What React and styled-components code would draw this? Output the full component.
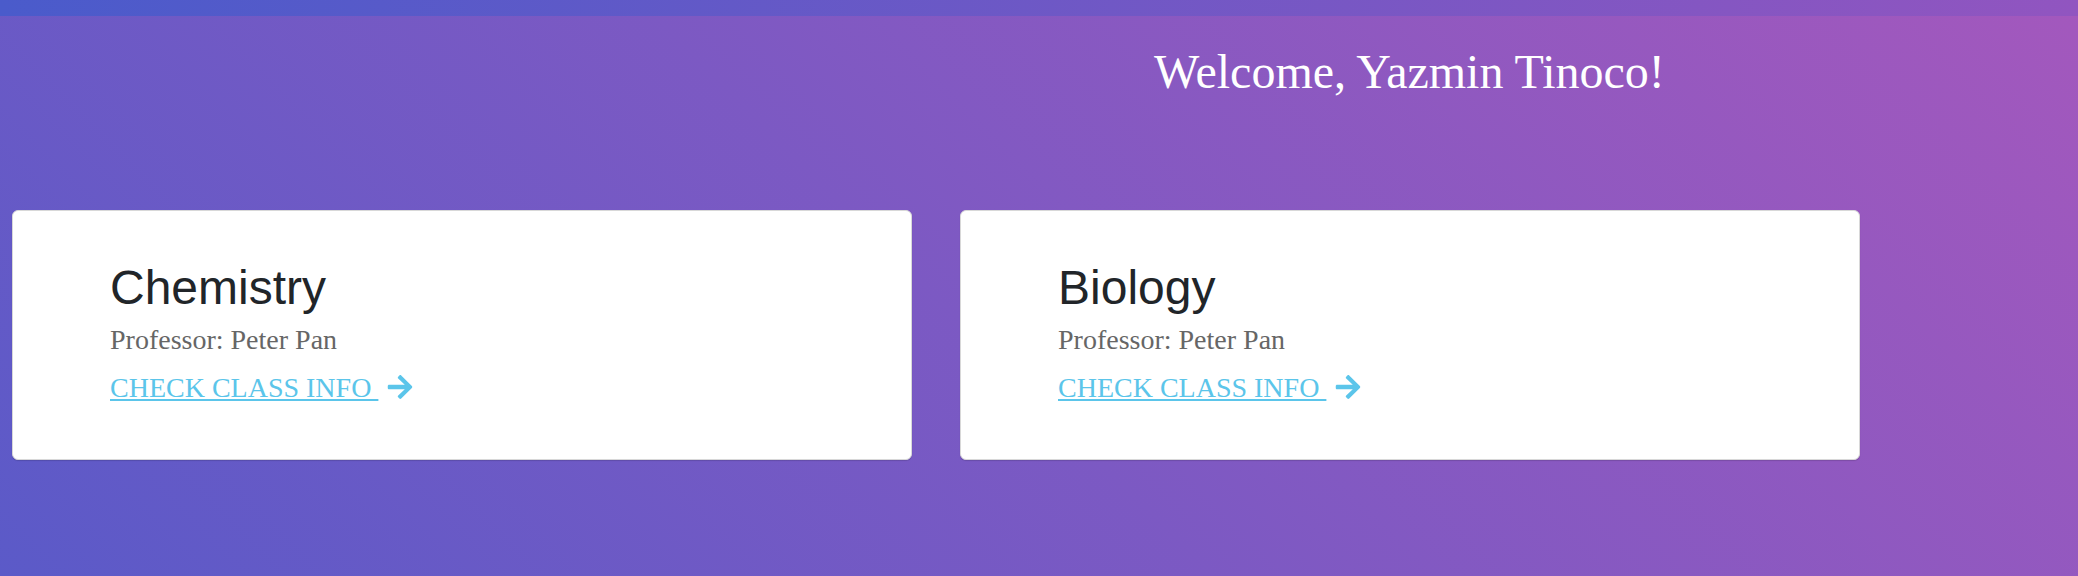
import styled, { createGlobalStyle } from "styled-components";
import { FaArrowRight } from "react-icons/fa";

const GlobalStyle = createGlobalStyle`
  html, body, #root {
    margin: 0;
    padding: 0;
    height: 100%;
  }
  body {
    font-family: "Liberation Serif", "Times New Roman", serif;
  }
`;

const classes = [
  { id: 1, name: "Chemistry", professor: "Peter Pan" },
  { id: 2, name: "Biology", professor: "Peter Pan" },
];

export default function App() {
  return (
    <>
      <GlobalStyle />
      <Page>
        <TopBar />
        <Welcome>Welcome, Yazmin Tinoco!</Welcome>
        <CardRow>
          {classes.map((c) => (
            <ClassCard key={c.id}>
              <Title>{c.name}</Title>
              <Professor>Professor: {c.professor}</Professor>
              <LinkRow>
                <InfoLink href="#">{"CHECK CLASS INFO "}</InfoLink>
                <Arrow>
                  <FaArrowRight size={28} />
                </Arrow>
              </LinkRow>
            </ClassCard>
          ))}
        </CardRow>
      </Page>
    </>
  );
}

const Page = styled.div`
  min-height: 100vh;
  box-sizing: border-box;
  background: linear-gradient(45deg, #5b5ac8 0%, #a358bd 100%);
`;

const TopBar = styled.div`
  height: 16px;
  background: linear-gradient(to right, #4a5bcb, #9155c0);
`;

const Welcome = styled.h1`
  margin: 28px 0 0 1154px;
  font-weight: normal;
  font-size: 48px;
  line-height: 55px;
  color: #fff;
  white-space: nowrap;
`;

const CardRow = styled.div`
  display: flex;
  gap: 48px;
  padding: 111px 0 0 12px;
`;

const ClassCard = styled.div`
  box-sizing: border-box;
  width: 900px;
  height: 250px;
  padding: 48px 0 0 97px;
  background: #fff;
  border: 1px solid #d8d8d8;
  border-radius: 6px;
  box-shadow: 0 1px 1px rgba(0, 0, 0, 0.14);
`;

const Title = styled.h2`
  margin: 0;
  font-family: "Liberation Sans", Arial, sans-serif;
  font-weight: normal;
  font-size: 48px;
  line-height: 1.2;
  color: #212529;
`;

const Professor = styled.p`
  margin: 7px 0 0;
  font-size: 28px;
  line-height: 31px;
  color: #666;
`;

const LinkRow = styled.div`
  display: flex;
  align-items: center;
  margin-top: 17px;
  height: 31px;
`;

const InfoLink = styled.a`
  font-size: 28px;
  line-height: 31px;
  color: #5bc5ea;
  text-decoration: underline;
  white-space: pre;
`;

const Arrow = styled.span`
  display: flex;
  margin-left: 8px;
  color: #5bc5ea;
`;
